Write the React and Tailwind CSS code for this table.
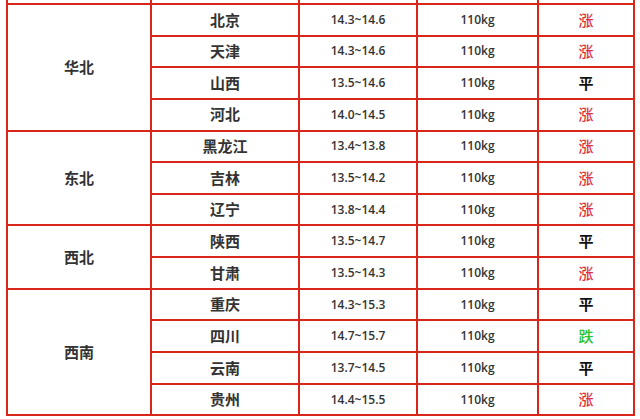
const regions = [
  {
    name: '华北',
    rows: [
      ['北京', '14.3~14.6', '涨'],
      ['天津', '14.3~14.6', '涨'],
      ['山西', '13.5~14.6', '平'],
      ['河北', '14.0~14.5', '涨'],
    ],
  },
  {
    name: '东北',
    rows: [
      ['黑龙江', '13.4~13.8', '涨'],
      ['吉林', '13.5~14.2', '涨'],
      ['辽宁', '13.8~14.4', '涨'],
    ],
  },
  {
    name: '西北',
    rows: [
      ['陕西', '13.5~14.7', '平'],
      ['甘肃', '13.5~14.3', '涨'],
    ],
  },
  {
    name: '西南',
    rows: [
      ['重庆', '14.3~15.3', '平'],
      ['四川', '14.7~15.7', '跌'],
      ['云南', '13.7~14.5', '平'],
      ['贵州', '14.4~15.5', '涨'],
    ],
  },
];

const trendColor = {
  涨: 'text-[#e0303c] font-medium',
  平: 'text-[#111111] font-bold',
  跌: 'text-[#2cc22c] font-medium',
};

const cell = 'border-2 border-[#d9261a] text-center align-middle p-0';
const cjk = "[font-family:'Noto_Sans_CJK_SC',sans-serif]";
const num = "[font-family:'Open_Sans','Noto_Sans_CJK_SC',sans-serif]";

export default function App() {
  return (
    <div className="w-[640px] h-[419px] overflow-hidden bg-white">
      <table className="border-collapse table-fixed w-[629px] ml-[6px] mt-[-28.65px] text-[#333333]">
        <colgroup>
          <col className="w-[144px]" />
          <col className="w-[148px]" />
          <col className="w-[118px]" />
          <col className="w-[121px]" />
          <col className="w-[96px]" />
        </colgroup>
        <tbody>
          <tr className="h-[31.65px]">
            <td className={cell}></td>
            <td className={cell}></td>
            <td className={cell}></td>
            <td className={cell}></td>
            <td className={cell}></td>
          </tr>
          {regions.map((region) =>
            region.rows.map((row, i) => (
              <tr key={region.name + row[0]} className="h-[31.65px]">
                {i === 0 && (
                  <td rowSpan={region.rows.length} className={`${cell} ${cjk} text-[15px] font-bold`}>
                    {region.name}
                  </td>
                )}
                <td className={`${cell} ${cjk} text-[15px] font-bold`}>{row[0]}</td>
                <td className={`${cell} ${num} text-[12px] font-semibold`}>{row[1]}</td>
                <td className={`${cell} ${num} text-[12px] font-semibold`}>110kg</td>
                <td className={`${cell} ${cjk} text-[15px] ${trendColor[row[2]]}`}>{row[2]}</td>
              </tr>
            ))
          )}
        </tbody>
      </table>
    </div>
  );
}
